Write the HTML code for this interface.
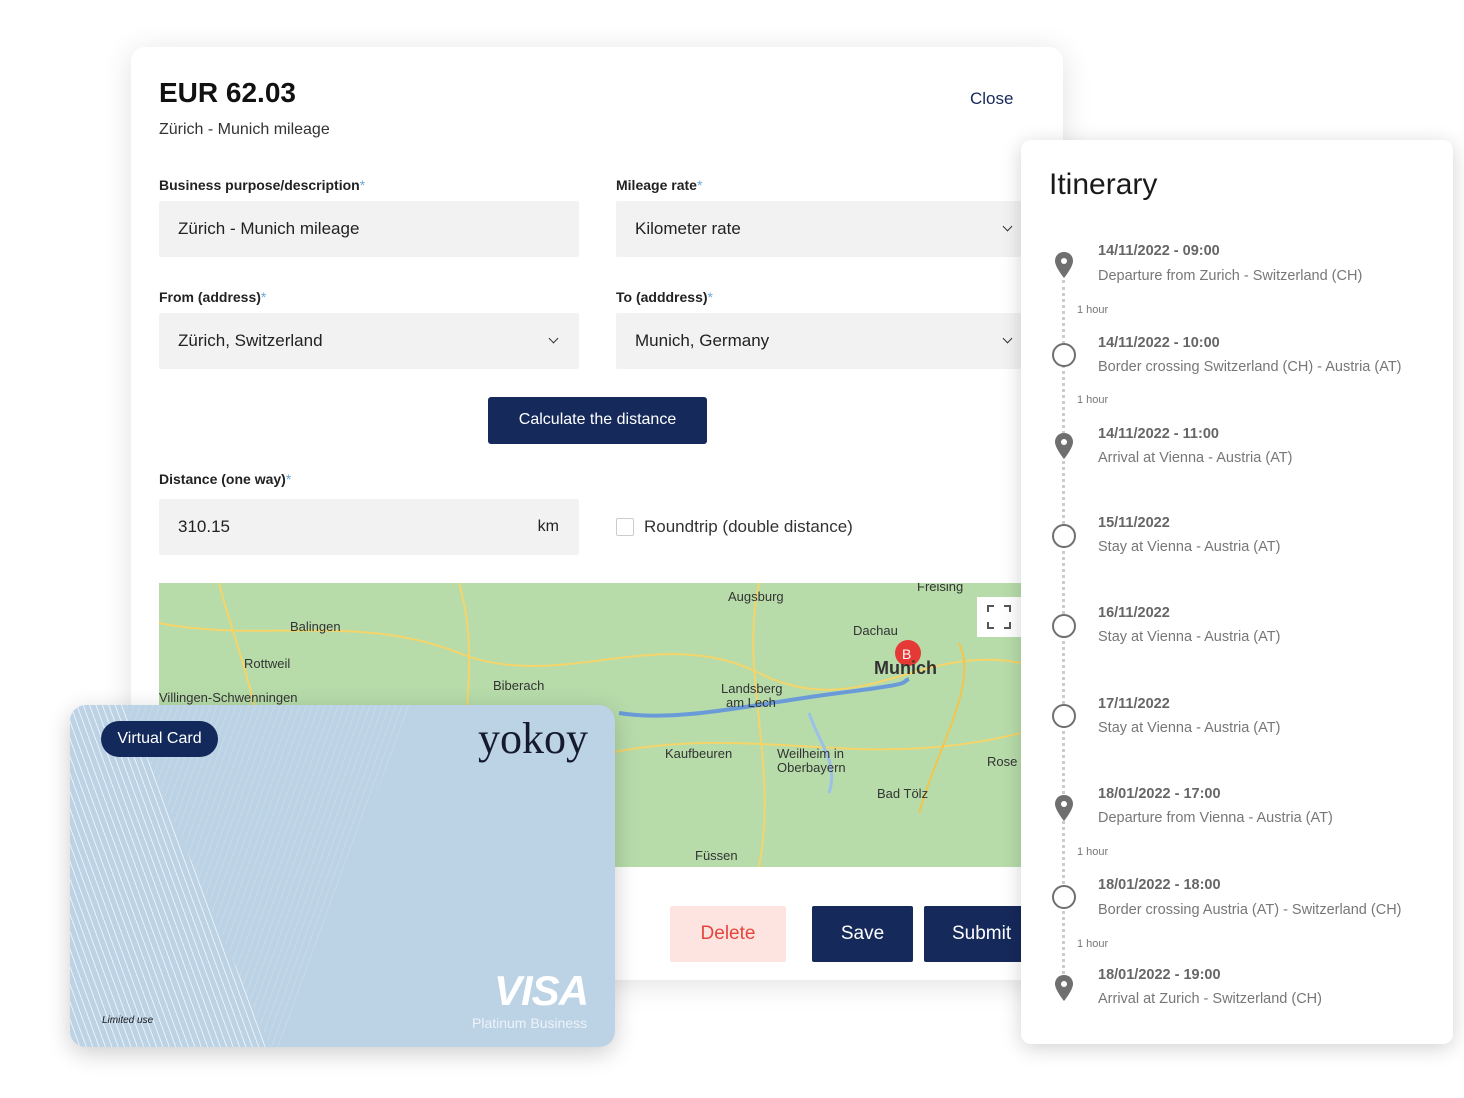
<!DOCTYPE html>
<html><head><meta charset="utf-8"><style>
*{box-sizing:border-box;margin:0;padding:0}
body{width:1464px;height:1098px;background:#fff;font-family:"Liberation Sans",sans-serif;position:relative;overflow:hidden;color:#1c1c1c}
.abs{position:absolute}
.main{left:131px;top:47px;width:932px;height:933px;background:#fff;border-radius:14px;box-shadow:0 4px 30px rgba(0,0,0,.12)}
.lbl{font-size:14px;font-weight:bold;color:#222}
.lbl span{color:#6aa8d8;font-weight:normal}
.inp{background:#f2f2f2;height:56px;font-size:17px;color:#222;padding:0 19px;line-height:56px;border-radius:2px}
.chev{position:absolute;right:22px;top:22px;width:7px;height:7px;border-right:1.5px solid #333;border-bottom:1.5px solid #333;transform:rotate(45deg)}
.it{left:1021px;top:140px;width:432px;height:904px;background:#fff;border-radius:10px;box-shadow:0 4px 20px rgba(0,0,0,.18);overflow:hidden}
.d{position:absolute;left:77px;font-size:14.5px;font-weight:bold;color:#666}
.s{position:absolute;left:77px;font-size:14.5px;color:#777}
.h{position:absolute;left:56px;font-size:11px;color:#777}
.circ{position:absolute;left:31px;width:24px;height:24px;border:2.5px solid #6f6f6f;border-radius:50%}
.dots{position:absolute;left:41px;width:3px;border-left:3px dotted #ccc}
</style></head><body>
<div class="abs main">
 <div class="abs" style="left:28px;top:30px;font-size:28px;font-weight:bold;color:#111">EUR 62.03</div>
 <div class="abs" style="left:839px;top:42px;font-size:17px;color:#15295b">Close</div>
 <div class="abs" style="left:28px;top:74px;font-size:16px;color:#333">Zürich - Munich mileage</div>
 <div class="abs lbl" style="left:28px;top:130px">Business purpose/description<span>*</span></div>
 <div class="abs lbl" style="left:485px;top:130px">Mileage rate<span>*</span></div>
 <div class="abs inp" style="left:28px;top:154px;width:420px">Zürich - Munich mileage</div>
 <div class="abs inp" style="left:485px;top:154px;width:405px">Kilometer rate<div class="chev" style="right:10px"></div></div>
 <div class="abs lbl" style="left:28px;top:242px">From (address)<span>*</span></div>
 <div class="abs lbl" style="left:485px;top:242px">To (adddress)<span>*</span></div>
 <div class="abs inp" style="left:28px;top:266px;width:420px">Zürich, Switzerland<div class="chev"></div></div>
 <div class="abs inp" style="left:485px;top:266px;width:405px">Munich, Germany<div class="chev" style="right:10px"></div></div>
 <div class="abs" style="left:357px;top:350px;width:219px;height:47px;background:#15295b;color:#fff;font-size:16px;text-align:center;line-height:45px;border-radius:3px">Calculate the distance</div>
 <div class="abs lbl" style="left:28px;top:424px">Distance (one way)<span>*</span></div>
 <div class="abs inp" style="left:28px;top:452px;width:420px">310.15<span style="position:absolute;right:20px;font-size:16px">km</span></div>
 <div class="abs" style="left:485px;top:471px;width:18px;height:18px;border:1.5px solid #ccc;border-radius:2px"></div>
 <div class="abs" style="left:513px;top:470px;font-size:17px;color:#333">Roundtrip (double distance)</div>
 <div class="abs" style="left:28px;top:536px;width:862px;height:284px;background:#b5dca9;overflow:hidden">
  <svg width="862" height="284" style="position:absolute;left:0;top:0">
   <rect width="862" height="284" fill="#b7dcaa"/>
   <path d="M0 40 C100 60 200 30 300 70 S500 40 600 90 S760 60 862 80" stroke="#f5d46a" stroke-width="2" fill="none"/>
   <path d="M60 0 C80 80 120 150 100 284" stroke="#f5d46a" stroke-width="2" fill="none"/>
   <path d="M300 0 C330 100 280 200 320 284" stroke="#f5d46a" stroke-width="2" fill="none"/>
   <path d="M600 0 C580 90 620 180 600 284" stroke="#f5d46a" stroke-width="2" fill="none"/>
   <path d="M0 180 C150 160 300 200 450 170 S700 190 862 150" stroke="#f5d46a" stroke-width="2" fill="none"/>
   <path d="M460 130 C520 140 600 120 680 110 S740 100 750 96" stroke="#6a9bd8" stroke-width="4" fill="none"/>
   <path d="M800 60 C820 100 780 160 760 230" stroke="#f1c54f" stroke-width="2" fill="none"/>
   <path d="M650 130 C660 160 680 180 670 210" stroke="#9cc0e8" stroke-width="3" fill="none"/>
   <circle cx="749" cy="70" r="13" fill="#e53935"/>
   <text x="743" y="76" font-size="14" fill="#fff" font-family="Liberation Sans">B</text>
   <g font-family="Liberation Sans" font-size="13" fill="#333">
    <text x="569" y="18">Augsburg</text><text x="131" y="48">Balingen</text><text x="85" y="85">Rottweil</text>
    <text x="0" y="119">Villingen-Schwenningen</text><text x="334" y="107">Biberach</text><text x="562" y="110">Landsberg</text>
    <text x="567" y="124">am Lech</text><text x="694" y="52">Dachau</text><text x="715" y="91" font-size="18" font-weight="bold">Munich</text>
    <text x="506" y="175">Kaufbeuren</text><text x="618" y="175">Weilheim in</text><text x="618" y="189">Oberbayern</text>
    <text x="718" y="215">Bad Tölz</text><text x="536" y="277">Füssen</text><text x="758" y="8">Freising</text><text x="828" y="183">Rose</text>
   </g>
   <rect x="818" y="14" width="44" height="40" fill="#fff"/>
   <path d="M829 29v-6h6M845 23h6v6M851 39v6h-6M835 45h-6v-6" stroke="#555" stroke-width="2" fill="none"/>
  </svg>
 </div>
 <div class="abs" style="left:539px;top:859px;width:116px;height:56px;background:#fde4e1;color:#e4463b;font-size:19px;text-align:center;line-height:56px;border-radius:2px">Delete</div>
 <div class="abs" style="left:681px;top:859px;width:101px;height:56px;background:#15295b;color:#fff;font-size:19px;text-align:center;line-height:56px;border-radius:2px">Save</div>
 <div class="abs" style="left:793px;top:859px;width:110px;height:56px;background:#15295b;color:#fff;font-size:19px;line-height:56px;padding-left:28px;border-radius:2px">Submit</div>
</div>

<div class="abs it">
 <div class="abs" style="left:28px;top:28px;font-size:30px;color:#1a1a1a">Itinerary</div>
 <div class="dots" style="top:140px;height:700px;left:41px"></div>
 <svg class="abs" style="left:33px;top:112px;background:#fff" width="20" height="26" viewBox="0 0 20 26"><path d="M10 0C4.5 0 1 4 1 9c0 6 9 17 9 17s9-11 9-17c0-5-3.5-9-9-9z" fill="#6f6f6f"/><circle cx="10" cy="9" r="3" fill="#fff"/></svg>
 <div class="d" style="top:103px">14/11/2022 - 09:00</div><div class="s" style="top:128px">Departure from Zurich - Switzerland (CH)</div>
 <div class="h" style="top:164px">1 hour</div>
 <div class="circ" style="top:203px;background:#fff"></div>
 <div class="d" style="top:195px">14/11/2022 - 10:00</div><div class="s" style="top:219px">Border crossing Switzerland (CH) - Austria (AT)</div>
 <div class="h" style="top:254px">1 hour</div>
 <svg class="abs" style="left:33px;top:293px;background:#fff" width="20" height="26" viewBox="0 0 20 26"><path d="M10 0C4.5 0 1 4 1 9c0 6 9 17 9 17s9-11 9-17c0-5-3.5-9-9-9z" fill="#6f6f6f"/><circle cx="10" cy="9" r="3" fill="#fff"/></svg>
 <div class="d" style="top:286px">14/11/2022 - 11:00</div><div class="s" style="top:310px">Arrival at Vienna - Austria (AT)</div>
 <div class="circ" style="top:384px;background:#fff"></div>
 <div class="d" style="top:375px">15/11/2022</div><div class="s" style="top:399px">Stay at Vienna - Austria (AT)</div>
 <div class="circ" style="top:474px;background:#fff"></div>
 <div class="d" style="top:465px">16/11/2022</div><div class="s" style="top:489px">Stay at Vienna - Austria (AT)</div>
 <div class="circ" style="top:564px;background:#fff"></div>
 <div class="d" style="top:556px">17/11/2022</div><div class="s" style="top:580px">Stay at Vienna - Austria (AT)</div>
 <svg class="abs" style="left:33px;top:655px;background:#fff" width="20" height="26" viewBox="0 0 20 26"><path d="M10 0C4.5 0 1 4 1 9c0 6 9 17 9 17s9-11 9-17c0-5-3.5-9-9-9z" fill="#6f6f6f"/><circle cx="10" cy="9" r="3" fill="#fff"/></svg>
 <div class="d" style="top:646px">18/01/2022 - 17:00</div><div class="s" style="top:670px">Departure from Vienna - Austria (AT)</div>
 <div class="h" style="top:706px">1 hour</div>
 <div class="circ" style="top:745px;background:#fff"></div>
 <div class="d" style="top:737px">18/01/2022 - 18:00</div><div class="s" style="top:762px">Border crossing Austria (AT) - Switzerland (CH)</div>
 <div class="h" style="top:798px">1 hour</div>
 <svg class="abs" style="left:33px;top:835px;background:#fff" width="20" height="26" viewBox="0 0 20 26"><path d="M10 0C4.5 0 1 4 1 9c0 6 9 17 9 17s9-11 9-17c0-5-3.5-9-9-9z" fill="#6f6f6f"/><circle cx="10" cy="9" r="3" fill="#fff"/></svg>
 <div class="d" style="top:827px">18/01/2022 - 19:00</div><div class="s" style="top:851px">Arrival at Zurich - Switzerland (CH)</div>
</div>

<div class="abs" style="left:70px;top:705px;width:545px;height:342px;border-radius:16px;background:#bcd2e5;overflow:hidden;box-shadow:0 6px 24px rgba(0,0,0,.2)">
 <svg width="545" height="342" style="position:absolute;left:0;top:0">
  <defs><pattern id="p" width="6" height="6" patternUnits="userSpaceOnUse" patternTransform="rotate(-20)"><line x1="0" y1="0" x2="0" y2="6" stroke="#fff" stroke-width="1.4" opacity="1"/></pattern>
  <pattern id="q" width="6" height="6" patternUnits="userSpaceOnUse" patternTransform="rotate(20)"><line x1="0" y1="0" x2="0" y2="6" stroke="#fff" stroke-width="0.8" opacity=".4"/></pattern></defs>
  <polygon points="0,0 55,0 200,342 0,342" fill="url(#p)"/>
  <polygon points="55,0 340,0 210,342 200,342" fill="url(#q)"/>
 </svg>
 <div class="abs" style="left:31px;top:16px;width:117px;height:36px;background:#13295b;border-radius:18px;color:#fff;font-size:16px;text-align:center;line-height:36px">Virtual Card</div>
 <div class="abs" style="left:408px;top:8px;font-family:'Liberation Serif',serif;font-size:44px;color:#151a2e">yokoy</div>
 <div class="abs" style="left:424px;top:262px;font-size:42px;font-weight:bold;font-style:italic;color:#fff;letter-spacing:-1px">VISA</div>
 <div class="abs" style="left:402px;top:310px;font-size:14px;color:#eef3f8">Platinum Business</div>
 <div class="abs" style="left:32px;top:310px;font-size:10px;font-style:italic;color:#1a1a1a">Limited use</div>
</div>
</body></html>
